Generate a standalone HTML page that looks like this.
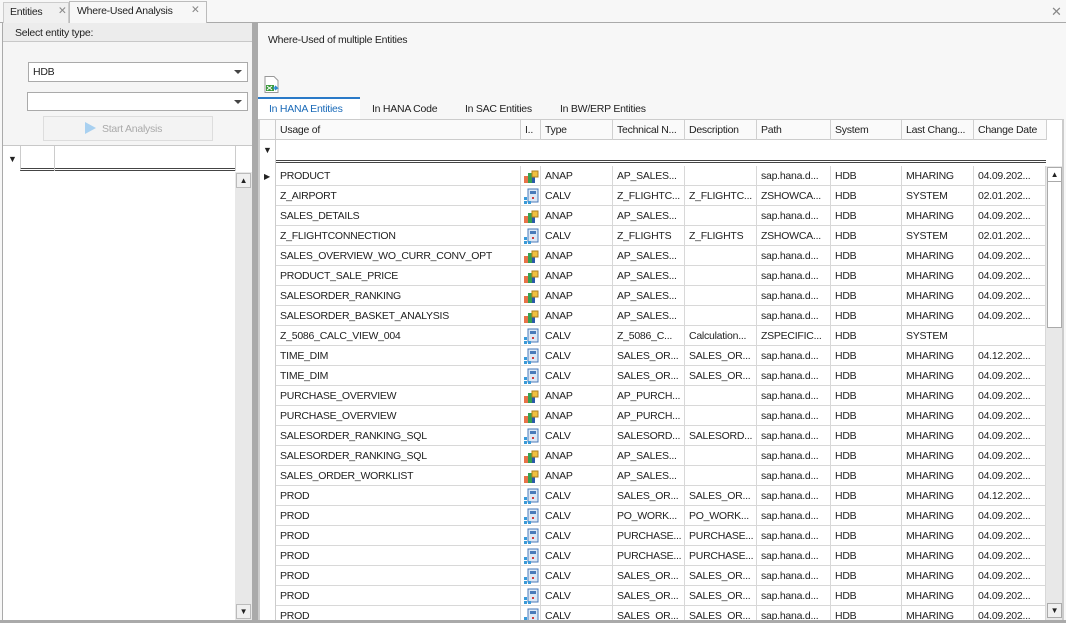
<!DOCTYPE html>
<html><head><meta charset="utf-8"><style>
*{box-sizing:border-box;margin:0;padding:0}
body{width:1066px;height:623px;overflow:hidden;background:#f7f7f7;font-family:"Liberation Sans",sans-serif;font-size:10.5px;letter-spacing:-0.25px;color:#222;position:relative}
.a{position:absolute}
.row{position:absolute;left:16px;height:20px;width:770px;border-bottom:1px solid #d8d8d8;background:#fff}
.c{position:absolute;top:0;height:20px;line-height:20px;padding-left:4px;white-space:nowrap;overflow:hidden;border-right:1px solid #d8d8d8}
.c svg{display:block;position:absolute;left:2px;top:2px}
.h{position:absolute;top:120px;height:20px;line-height:20px;padding-left:4px;border-right:1px solid #d0d0d0;white-space:nowrap;overflow:hidden}
</style></head><body>
<div class="a" style="left:0;top:0;width:1066px;height:23px;background:#f7f7f7;border-bottom:1px solid #aaa"></div>
<div class="a" style="left:3px;top:2px;width:66px;height:21px;border:1px solid #ccc;border-bottom:none;background:#f0f0f0"></div>
<div class="a" style="left:10px;top:6px">Entities</div>
<div class="a" style="left:58px;top:5px;color:#888">✕</div>
<div class="a" style="left:69px;top:1px;width:138px;height:23px;border:1px solid #bbb;border-bottom:none;background:#f7f7f7"></div>
<div class="a" style="left:77px;top:5px">Where-Used Analysis</div>
<div class="a" style="left:191px;top:4px;color:#888">✕</div>
<div class="a" style="left:1051px;top:4px;color:#888;font-size:13px">✕</div>
<div class="a" style="left:2px;top:23px;width:251px;height:598px;border-left:1px solid #aaa;background:#f5f5f5"></div>
<div class="a" style="left:3px;top:23px;width:249px;height:19px;background:#ececec;border-bottom:1px solid #c8c8c8"></div>
<div class="a" style="left:15px;top:27px">Select entity type:</div>
<div class="a" style="left:28px;top:62px;width:220px;height:20px;border:1px solid #aaa;background:#fff;padding:3px 4px">HDB</div>
<div class="a" style="left:234px;top:70px;width:0;height:0;border-left:4px solid transparent;border-right:4px solid transparent;border-top:4px solid #444"></div>
<div class="a" style="left:27px;top:92px;width:221px;height:19px;border:1px solid #aaa;background:#fff"></div>
<div class="a" style="left:234px;top:100px;width:0;height:0;border-left:4px solid transparent;border-right:4px solid transparent;border-top:4px solid #444"></div>
<div class="a" style="left:43px;top:116px;width:170px;height:25px;border:1px solid #ddd;background:#f3f3f3"></div>
<div class="a" style="left:85px;top:122px;width:0;height:0;border-top:6px solid transparent;border-bottom:6px solid transparent;border-left:11px solid #a8d0f0"></div>
<div class="a" style="left:102px;top:123px;color:#aaa">Start Analysis</div>
<div class="a" style="left:3px;top:145px;width:249px;height:476px;background:#fff;border-top:1px solid #c8c8c8"></div>
<div class="a" style="left:20px;top:146px;width:215px;height:25px;border-left:1px solid #ccc;border-bottom:3px double #444"></div>
<div class="a" style="left:54px;top:146px;width:1px;height:25px;background:#ccc"></div>
<div class="a" style="left:235px;top:146px;width:1px;height:25px;background:#ccc"></div>
<div class="a" style="left:8px;top:154px;font-size:9px">▼</div>
<div class="a" style="left:235px;top:172px;width:17px;height:449px;background:#e8e8e8"></div>
<div class="a" style="left:236px;top:173px;width:15px;height:15px;border:1px solid #bbb;background:#f0f0f0;font-size:8px;text-align:center;line-height:13px">▲</div>
<div class="a" style="left:236px;top:604px;width:15px;height:15px;border:1px solid #bbb;background:#f0f0f0;font-size:8px;text-align:center;line-height:13px">▼</div>
<div class="a" style="left:252px;top:23px;width:6px;height:600px;background:#aaa"></div>
<div class="a" style="left:268px;top:34px">Where-Used of multiple Entities</div>
<svg class="a" style="left:264px;top:76px" width="16" height="17"><path d="M1 .5h9l4 4v12H1z" fill="#fff" stroke="#999"/><rect x="2" y="9" width="8" height="6" fill="#3a9a3a"/><path d="M3 10l5 4M8 10l-5 4" stroke="#fff"/><path d="M9 12h4l-2-2M13 12l-2 2" stroke="#2a8ad0" stroke-width="1.5" fill="none"/></svg>
<div class="a" style="left:258px;top:97px;width:102px;height:23px;border-top:2px solid #2a7ac8;background:#fff"></div>
<div class="a" style="left:269px;top:103px;color:#1a6ab8">In HANA Entities</div>
<div class="a" style="left:372px;top:103px">In HANA Code</div>
<div class="a" style="left:465px;top:103px">In SAC Entities</div>
<div class="a" style="left:560px;top:103px">In BW/ERP Entities</div>
<div class="a" style="left:258px;top:119px;width:806px;height:501px;background:#fff;border-left:2px solid #ccc;border-right:2px solid #ccc;border-top:1px solid #ccc"></div>
<div class="a" style="left:260px;top:120px;width:786px;height:20px;border-bottom:1px solid #ccc;background:#fafafa"></div>
<div class="a" style="left:260px;top:120px;width:16px;height:500px;border-right:1px solid #ccc"></div>
<div class="h" style="left:276px;width:245px">Usage of</div>
<div class="h" style="left:521px;width:20px">I..</div>
<div class="h" style="left:541px;width:72px">Type</div>
<div class="h" style="left:613px;width:72px">Technical N...</div>
<div class="h" style="left:685px;width:72px">Description</div>
<div class="h" style="left:757px;width:74px">Path</div>
<div class="h" style="left:831px;width:71px">System</div>
<div class="h" style="left:902px;width:72px">Last Chang...</div>
<div class="h" style="left:974px;width:73px">Change Date</div>
<div class="a" style="left:276px;top:141px;width:770px;height:22px;border-bottom:3px double #444"></div>
<div class="a" style="left:263px;top:145px;font-size:9px">▼</div>
<div class="a" style="left:264px;top:172px;font-size:8px">▶</div>
<div id="g" class="a" style="left:260px;top:166px;width:786px;height:454px;overflow:hidden"></div>
<div class="a" style="left:1046px;top:166px;width:16px;height:454px;background:#e8e8e8"></div>
<div class="a" style="left:1047px;top:167px;width:15px;height:161px;border:1px solid #aaa;background:#fff"></div>
<div class="a" style="left:1047px;top:167px;width:15px;height:15px;border:1px solid #aaa;font-size:8px;text-align:center;line-height:13px">▲</div>
<div class="a" style="left:1047px;top:603px;width:15px;height:15px;border:1px solid #aaa;background:#f0f0f0;font-size:8px;text-align:center;line-height:13px">▼</div>
<div class="a" style="left:0;top:620px;width:1066px;height:3px;background:#aaa"></div>
<script>
var d=[["PRODUCT","A","AP_SALES...","","sap.hana.d...","MHARING","04.09.202..."],
["Z_AIRPORT","C","Z_FLIGHTC...","Z_FLIGHTC...","ZSHOWCA...","SYSTEM","02.01.202..."],
["SALES_DETAILS","A","AP_SALES...","","sap.hana.d...","MHARING","04.09.202..."],
["Z_FLIGHTCONNECTION","C","Z_FLIGHTS","Z_FLIGHTS","ZSHOWCA...","SYSTEM","02.01.202..."],
["SALES_OVERVIEW_WO_CURR_CONV_OPT","A","AP_SALES...","","sap.hana.d...","MHARING","04.09.202..."],
["PRODUCT_SALE_PRICE","A","AP_SALES...","","sap.hana.d...","MHARING","04.09.202..."],
["SALESORDER_RANKING","A","AP_SALES...","","sap.hana.d...","MHARING","04.09.202..."],
["SALESORDER_BASKET_ANALYSIS","A","AP_SALES...","","sap.hana.d...","MHARING","04.09.202..."],
["Z_5086_CALC_VIEW_004","C","Z_5086_C...","Calculation...","ZSPECIFIC...","SYSTEM",""],
["TIME_DIM","C","SALES_OR...","SALES_OR...","sap.hana.d...","MHARING","04.12.202..."],
["TIME_DIM","C","SALES_OR...","SALES_OR...","sap.hana.d...","MHARING","04.09.202..."],
["PURCHASE_OVERVIEW","A","AP_PURCH...","","sap.hana.d...","MHARING","04.09.202..."],
["PURCHASE_OVERVIEW","A","AP_PURCH...","","sap.hana.d...","MHARING","04.09.202..."],
["SALESORDER_RANKING_SQL","C","SALESORD...","SALESORD...","sap.hana.d...","MHARING","04.09.202..."],
["SALESORDER_RANKING_SQL","A","AP_SALES...","","sap.hana.d...","MHARING","04.09.202..."],
["SALES_ORDER_WORKLIST","A","AP_SALES...","","sap.hana.d...","MHARING","04.09.202..."],
["PROD","C","SALES_OR...","SALES_OR...","sap.hana.d...","MHARING","04.12.202..."],
["PROD","C","PO_WORK...","PO_WORK...","sap.hana.d...","MHARING","04.09.202..."],
["PROD","C","PURCHASE...","PURCHASE...","sap.hana.d...","MHARING","04.09.202..."],
["PROD","C","PURCHASE...","PURCHASE...","sap.hana.d...","MHARING","04.09.202..."],
["PROD","C","SALES_OR...","SALES_OR...","sap.hana.d...","MHARING","04.09.202..."],
["PROD","C","SALES_OR...","SALES_OR...","sap.hana.d...","MHARING","04.09.202..."],
["PROD","C","SALES_OR...","SALES_OR...","sap.hana.d...","MHARING","04.09.202..."]];
var ia='<svg width="16" height="16"><rect x="1" y="8" width="4" height="7" fill="#e8734a"/><rect x="5" y="5" width="4" height="10" fill="#3aa050"/><rect x="9" y="9" width="3" height="6" fill="#2a5aa8"/><rect x="9" y="3" width="6" height="6" fill="#f0c040" stroke="#b08020"/></svg>';
var ic='<svg width="16" height="16"><rect x="5" y="1" width="10" height="13" fill="#dde8f5" stroke="#4a7ab8"/><rect x="7" y="3" width="6" height="3" fill="#4a7ab8"/><rect x="1" y="9" width="3" height="3" fill="#3a9ad8"/><rect x="1" y="13" width="3" height="3" fill="#3a9ad8"/><rect x="5" y="13" width="3" height="3" fill="#3a9ad8"/><rect x="9" y="9" width="2" height="2" fill="#d04040"/></svg>';
var h='',w=[[0,245],[245,20],[265,72],[337,72],[409,72],[481,74],[555,71],[626,72],[698,72]];
d.forEach(function(r,i){var v=[r[0],r[1]=="A"?ia:ic,r[1]=="A"?"ANAP":"CALV",r[2],r[3],r[4],"HDB",r[5],r[6]];
h+='<div class="row" style="top:'+(i*20)+'px">';
v.forEach(function(t,j){h+='<div class="c" style="left:'+w[j][0]+'px;width:'+w[j][1]+'px">'+t+'</div>'});h+='</div>'});
document.getElementById('g').innerHTML=h;
</script>
</body></html>
